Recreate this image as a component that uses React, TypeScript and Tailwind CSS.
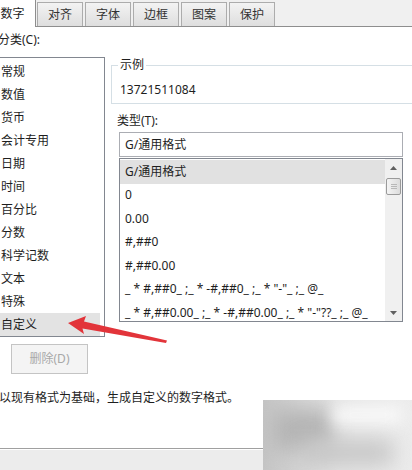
import React from 'react';

const categories = ['常规', '数值', '货币', '会计专用', '日期', '时间', '百分比', '分数', '科学记数', '文本', '特殊', '自定义'];

const formats = [
  'G/通用格式',
  '0',
  '0.00',
  '#,##0',
  '#,##0.00',
  '_ * #,##0_ ;_ * -#,##0_ ;_ * "-"_ ;_ @_',
  '_ * #,##0.00_ ;_ * -#,##0.00_ ;_ * "-"??_ ;_ @_',
];

const tabs = ['对齐', '字体', '边框', '图案', '保护'];

export default function App() {
  return (
    <div className="relative w-[412px] h-[470px] overflow-hidden bg-white flex flex-col text-[12px] text-[#1e1e1e] font-['Noto_Sans','Noto_Sans_CJK_SC',sans-serif]">
      {/* Tab strip */}
      <div className="h-[27px] shrink-0 flex items-end bg-[#f0f0f0] border-b border-[#8e8e8e]">
        <div className="-ml-[10px] -mb-px w-[46px] h-[27px] bg-white border-r border-[#8e8e8e] flex items-center justify-center leading-none">
          数字
        </div>
        <div className="ml-[1px] flex gap-[2px]">
          {tabs.map((t) => (
            <div
              key={t}
              className="w-[46px] h-[24px] border border-b-0 border-[#acacac] bg-gradient-to-b from-[#f3f3f3] to-[#dedede] flex items-center justify-center text-[#333] leading-none"
            >
              {t}
            </div>
          ))}
        </div>
      </div>

      {/* Body */}
      <div className="flex-1 flex flex-col">
        <div className="flex">
          {/* Category column */}
          <div className="w-[110px] shrink-0 flex flex-col">
            <div className="mt-[5px] -ml-[2px] leading-[16px]">分类(C):</div>
            <div className="mt-[9px] -ml-[2px] w-[107px] h-[280px] border border-[#828790] pt-[2px] overflow-hidden">
              {categories.map((c) => (
                <div
                  key={c}
                  className={`h-[23px] mr-[4px] pl-[2px] flex items-center leading-none ${
                    c === '自定义' ? 'bg-[#e3e3e3]' : ''
                  }`}
                >
                  {c}
                </div>
              ))}
            </div>
          </div>

          {/* Right side */}
          <div className="flex-1 flex flex-col">
            <fieldset className="mt-[30px] ml-[1px] -mr-[4px] h-[47px] border border-[#d5dfe5] px-[6px]">
              <legend className="px-[2px] leading-[16px]">示例</legend>
              <div className="mt-[9px] ml-[2px] leading-[16px]">13721511084</div>
            </fieldset>

            <div className="mt-[9px] ml-[7px] leading-[16px]">类型(T):</div>

            <div className="mt-[3px] ml-[9px] w-[284px] h-[25px] border border-[#abadb3] pl-[5px] flex items-center leading-none">
              G/通用格式
            </div>

            <div className="mt-[1px] ml-[9px] w-[284px] h-[164px] border border-[#828790] flex overflow-hidden">
              <div className="flex-1 pt-[1px] overflow-hidden">
                {formats.map((f, i) => (
                  <div
                    key={f}
                    className={`h-[23.5px] pl-[5px] flex items-center whitespace-pre leading-none ${
                      i === 0 ? 'bg-[#e1e1e1]' : ''
                    }`}
                  >
                    {f}
                  </div>
                ))}
              </div>
              {/* Scrollbar */}
              <div className="w-[17px] shrink-0 bg-[#f0f0f0] flex flex-col">
                <div className="h-[17px] flex items-center justify-center">
                  <svg width="7" height="4" viewBox="0 0 7 4">
                    <path d="M0 4 L3.5 0 L7 4 Z" fill="#606060" />
                  </svg>
                </div>
                <div className="mt-[2px] mx-[1px] h-[17px] rounded-[2px] border border-[#9a9a9a] bg-gradient-to-r from-[#f4f4f4] to-[#dcdcdc] flex items-center justify-center">
                  <div className="w-[6px] flex flex-col gap-[1px]">
                    <div className="h-px bg-[#b8b8b8]" />
                    <div className="h-px bg-[#b8b8b8]" />
                    <div className="h-px bg-[#b8b8b8]" />
                  </div>
                </div>
                <div className="flex-1" />
                <div className="h-[17px] flex items-center justify-center">
                  <svg width="7" height="4" viewBox="0 0 7 4">
                    <path d="M0 0 L3.5 4 L7 0 Z" fill="#606060" />
                  </svg>
                </div>
              </div>
            </div>
          </div>
        </div>

        <button
          disabled
          className="mt-[7px] ml-[11px] w-[77px] h-[30px] border border-[#c4c4c4] bg-[#f4f4f4] text-[#a8a8a8] leading-none"
        >
          删除(D)
        </button>

        <div className="mt-[16px] -ml-[1px] leading-[16px]">以现有格式为基础，生成自定义的数字格式。</div>
      </div>

      {/* Bottom strip */}
      <div className="h-[22px] shrink-0 border-t border-[#a0a0a0] bg-[#ececec] shadow-[inset_0_1px_0_#ffffff]" />

      {/* Blurred watermark */}
      <div className="absolute right-0 bottom-0 w-[149px] h-[70px] overflow-hidden bg-gradient-to-r from-[#c4c4c4] via-[#e4e4e4] to-[#ececec]">
        <div className="absolute left-[10px] top-[10px] w-[60px] h-[40px] bg-[#b5b5b5] blur-[10px]" />
        <div className="absolute left-[70px] top-[5px] w-[70px] h-[20px] bg-[#f8f8f8] blur-[8px]" />
        <div className="absolute left-[40px] top-[40px] w-[90px] h-[25px] bg-[#c8c8c8] blur-[10px]" />
      </div>

      {/* Red arrow annotation */}
      <svg className="absolute left-0 top-0 pointer-events-none" width="412" height="470" viewBox="0 0 412 470">
        <path
          d="M68 323 L86 316 L84 321.5 L167 340.5 L166 343 L82.5 328.5 L84 334 Z"
          fill="#e2343a"
        />
      </svg>
    </div>
  );
}
